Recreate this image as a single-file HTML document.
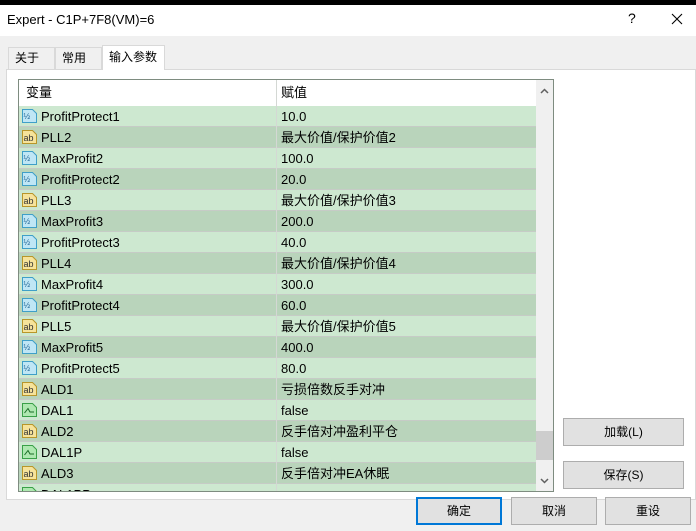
<!DOCTYPE html>
<html><head><meta charset="utf-8"><style>
*{margin:0;padding:0;box-sizing:border-box}
body{width:696px;height:531px;background:#f0f0f0;font-family:"Liberation Sans","Noto Sans CJK SC",sans-serif;font-size:12px;line-height:15px;color:#000;position:relative;overflow:hidden}
.abs{position:absolute}
.top{left:0;top:0;width:696px;height:5px;background:#000}
.title{left:0;top:5px;width:696px;height:31px;background:#fff}
.title span{position:absolute;left:7px;top:7px;font-size:13px}
.tab{top:47px;height:22px;border:1px solid #d9d9d9;border-bottom:none;background:#f0f0f0;padding:3px 6px;font-size:12px;line-height:15px}
.panel{left:6px;top:69px;width:690px;height:431px;background:#fff;border:1px solid #d9d9d9}
.list{left:18px;top:79px;width:536px;height:413px;border:1px solid #7e8c80;background:#fff;overflow:hidden}
.hdr{position:absolute;left:0;top:0;width:517px;height:26px;background:#fff;font-size:13px}
.hdr div{position:absolute;top:5px}
.row{position:absolute;left:0;width:517px;height:21px;border-bottom:1px solid #c6cbc6;font-size:13px}
.row .n{position:absolute;left:22px;top:3px;line-height:15px}
.row .v{position:absolute;left:262px;top:3px;line-height:15px}
.row svg{position:absolute;left:2px;top:2px}
.vdiv{position:absolute;left:257px;top:0;width:1px;height:413px;background:#d4d8d4}
.sb{position:absolute;left:517px;top:0;width:17px;height:411px;background:#f0f0f0}
.btn{height:28px;border:1px solid #adadad;background:#e1e1e1;text-align:center;line-height:26px;font-size:12px}
</style></head><body>
<div class="abs top"></div>
<div class="abs title"><span>Expert - C1P+7F8(VM)=6</span>
<span style="left:628px;top:6px;font-size:14px">?</span>
<svg style="position:absolute;left:671px;top:8px" width="12" height="12"><path d="M1 1L11 11M11 1L1 11" stroke="#000" stroke-width="1.1"/></svg></div>
<div class="abs panel"></div>
<div class="abs tab" style="left:8px;width:47px">关于</div>
<div class="abs tab" style="left:55px;width:47px">常用</div>
<div class="abs tab" style="left:102px;top:45px;height:25px;width:63px;background:#fff;padding-top:4px">输入参数</div>
<div class="abs list">
<div class="hdr"><div style="left:7px">变量</div><div style="left:262px">赋值</div></div>
<div id="rows"></div>
<div class="vdiv"></div>
<div class="sb">
<svg style="position:absolute;left:4px;top:8px" width="9" height="6"><path d="M1 5L4.5 1.5L8 5" stroke="#606060" stroke-width="1.5" fill="none"/></svg>
<div style="position:absolute;left:0;top:351px;width:17px;height:29px;background:#cdcdcd"></div>
<svg style="position:absolute;left:4px;top:398px" width="9" height="6"><path d="M1 1L4.5 4.5L8 1" stroke="#606060" stroke-width="1.5" fill="none"/></svg>
</div>
</div>
<div class="abs btn" style="left:563px;top:418px;width:121px">加载(L)</div>
<div class="abs btn" style="left:563px;top:461px;width:121px">保存(S)</div>
<div class="abs btn" style="left:416px;top:497px;width:86px;border:2px solid #0078d7;line-height:24px">确定</div>
<div class="abs btn" style="left:511px;top:497px;width:86px">取消</div>
<div class="abs btn" style="left:605px;top:497px;width:86px">重设</div>
<script>
var d=[["n","ProfitProtect1","10.0"],["a","PLL2","最大价值/保护价值2"],["n","MaxProfit2","100.0"],["n","ProfitProtect2","20.0"],["a","PLL3","最大价值/保护价值3"],["n","MaxProfit3","200.0"],["n","ProfitProtect3","40.0"],["a","PLL4","最大价值/保护价值4"],["n","MaxProfit4","300.0"],["n","ProfitProtect4","60.0"],["a","PLL5","最大价值/保护价值5"],["n","MaxProfit5","400.0"],["n","ProfitProtect5","80.0"],["a","ALD1","亏损倍数反手对冲"],["b","DAL1","false"],["a","ALD2","反手倍对冲盈利平仓"],["b","DAL1P","false"],["a","ALD3","反手倍对冲EA休眠"],["b","DAL1PP",""]];
var ic={n:'<svg width="17" height="16"><path d="M1.5 1.5H11.5L15.5 5.5V14.5H1.5Z" fill="#bfe6f5" stroke="#3f9fc8"/><text x="2.5" y="11" font-size="8" fill="#1a5f90" font-family="Liberation Sans">½</text></svg>',
a:'<svg width="17" height="16"><path d="M1.5 1.5H11.5L15.5 5.5V14.5H1.5Z" fill="#f6e39a" stroke="#b8962a"/><text x="2.5" y="12" font-size="9" fill="#333" font-family="Liberation Sans">ab</text></svg>',
b:'<svg width="17" height="16"><path d="M1.5 1.5H11.5L15.5 5.5V14.5H1.5Z" fill="#aee8b0" stroke="#3aa048"/><path d="M3.5 11L7 6.5L9 10H13" stroke="#1c6c28" fill="none"/></svg>'};
var h="";d.forEach(function(r,i){h+='<div class="row" style="top:'+(26+i*21)+'px;background:'+(i%2?'#b9d4bb':'#cde8d0')+'">'+ic[r[0]]+'<div class="n">'+r[1]+'</div><div class="v">'+r[2]+'</div></div>'});
document.getElementById("rows").innerHTML=h;
</script>
</body></html>
